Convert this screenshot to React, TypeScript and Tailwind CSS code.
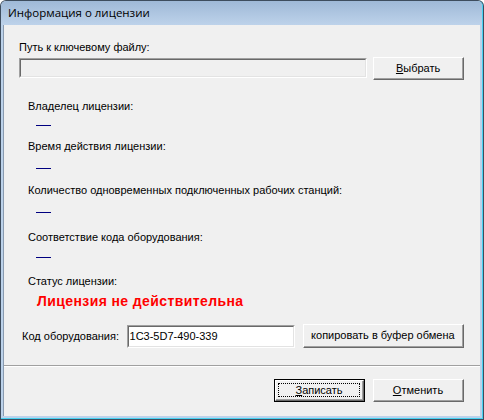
const body = { fontFamily: '"Liberation Sans", Arial, sans-serif' };

const RaisedButton = ({ label, hot, className = "", isDefault = false }: { label: string; hot?: number; className?: string; isDefault?: boolean }) => {
  const text =
    hot === undefined ? (
      label
    ) : (
      <>
        {label.slice(0, hot)}
        <span className="underline underline-offset-1">{label[hot]}</span>
        {label.slice(hot + 1)}
      </>
    );
  return (
    <div className={`${className} ${isDefault ? "border border-[#000]" : ""} flex`}>
      <div className="flex-1 flex border-t border-l border-white border-b border-r border-b-[#696969] border-r-[#696969] bg-[#f0f0f0]">
        <div className="flex-1 flex border-b border-r border-[#a0a0a0] items-center justify-center p-[2px]">
          <div className={`flex-1 h-full flex items-center justify-center text-[11px] text-black ${isDefault ? "outline outline-1 outline-dotted outline-black -outline-offset-1" : ""}`}>
            {text}
          </div>
        </div>
      </div>
    </div>
  );
};

const Sunken = ({ className = "", children }: { className?: string; children?: React.ReactNode }) => (
  <div className={`${className} border-t border-l border-[#a0a0a0] border-b border-r border-b-white border-r-white flex`}>
    <div className="flex-1 flex items-center border-t border-l border-[#696969] border-b border-r border-b-[#e3e3e3] border-r-[#e3e3e3]">
      {children}
    </div>
  </div>
);

// dash line drawn at a whole pixel so it stays navy
const Dash = ({ h = 18, className = "" }: { h?: number; className?: string }) => (
  <div className={`pl-[32px] ${className}`} style={{ height: h, paddingTop: Math.floor(h / 2) }}>
    <div className="w-[15px] h-px bg-[#000080]" />
  </div>
);

const Label = ({ text, className = "" }: { text: string; className?: string }) => (
  <div className={`h-[20px] flex items-center pl-[24px] text-[11px] text-black ${className}`}>{text}</div>
);

export default function App() {
  return (
    <div className="w-[484px] h-[420px] flex flex-col bg-[#3e4d5e] p-px rounded-t-[6px]" style={body}>
      <div className="flex-1 flex flex-col bg-[#bcd2ea] rounded-t-[5px] border-r border-b border-r-[#47d2f2] border-b-[#47d2f2]">
        <div className="h-[24px] flex items-center pl-[7px] bg-gradient-to-b from-[#9fb9d7] to-[#bdd2ea] rounded-t-[5px]">
          <span className="text-[11.5px] text-black" style={{ fontFamily: '"Open Sans", "Liberation Sans", sans-serif' }}>
            Информация о лицензии
          </span>
        </div>
        <div className="flex-1 flex flex-col bg-[#f0f0f0] mx-[2px] mb-[2px] border-l border-[#8a9bb0]">
          <div className="h-[13px] mt-[16px] pl-[15px] flex items-center text-[11px] text-black">Путь к ключевому файлу:</div>
          <div className="mt-[3px] flex items-start pl-[15px] pr-[16px]">
            <Sunken className="w-[349px] h-[20px] mt-px bg-[#f0f0f0]" />
            <RaisedButton label="Выбрать" hot={0} className="ml-[6px] w-[91px] h-[23px]" />
          </div>
          <Label text="Владелец лицензии:" className="mt-[16px]" />
          <Dash />
          <Label text="Время действия лицензии:" className="mt-[2px]" />
          <Dash className="mt-[3px]" />
          <Label text="Количество одновременных подключенных рабочих станций:" className="mt-[3px]" />
          <Dash h={24} />
          <Label text="Соответствие кода оборудования:" className="mt-[3px]" />
          <Dash h={20} />
          <Label text="Статус лицензии:" className="mt-[4px]" />
          <div className="h-[20px] flex items-center pl-[33px] text-[14px] font-bold text-[#ff0000] tracking-[0.4px]">
            Лицензия не действительна
          </div>
          <div className="mt-[13px] h-[24px] flex items-center pl-[18px] pr-[16px]">
            <span className="text-[11px] text-black w-[105px]">Код оборудования:</span>
            <Sunken className="w-[169px] h-[23px] bg-white">
              <span className="pl-[1px] text-[11px] text-black">1C3-5D7-490-339</span>
            </Sunken>
            <RaisedButton label="копировать в буфер обмена" className="ml-[8px] w-[162px] h-[24px]" />
          </div>
          <div className="mt-[17px] border-t border-[#a0a0a0] border-b border-b-white" />
          <div className="mt-[12px] flex justify-end gap-[8px] pr-[16px]">
            <RaisedButton label="Записать" hot={0} isDefault className="w-[91px] h-[23px]" />
            <RaisedButton label="Отменить" hot={0} className="w-[91px] h-[23px]" />
          </div>
        </div>
      </div>
    </div>
  );
}
